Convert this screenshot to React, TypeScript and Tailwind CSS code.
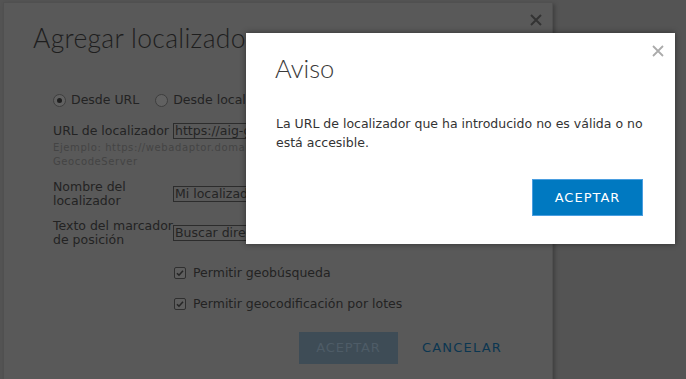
import React from "react";

const body = { fontFamily: '"DejaVu Sans", Verdana, sans-serif' };
const head = { fontFamily: 'Lato, "Open Sans", sans-serif' };

function Radio({ checked }: { checked?: boolean }) {
  return (
    <span className="w-[13px] h-[13px] rounded-full border border-[#3e3e3e] bg-[#616161] flex items-center justify-center shrink-0">
      {checked && <span className="w-[5px] h-[5px] rounded-full bg-[#1f1f1f]" />}
    </span>
  );
}

function Check() {
  return (
    <span className="w-[12px] h-[12px] rounded-[2px] border border-[#2f2f2f] bg-[#5e5e5e] flex items-center justify-center shrink-0">
      <svg width="8" height="8" viewBox="0 0 8 8">
        <path d="M1 4.2 L3 6.2 L7 1.8" stroke="#262626" strokeWidth="1.6" fill="none" />
      </svg>
    </span>
  );
}

function Field({ value }: { value: string }) {
  return (
    <div className="w-[230px] h-[16px] border border-[#2c2c2c] text-[12.5px] leading-[14px] px-[1px] text-[#242424] overflow-hidden whitespace-nowrap">
      {value}
    </div>
  );
}

export default function App() {
  return (
    <div className="relative w-[686px] h-[379px] overflow-hidden bg-[#545454]" style={body}>
      {/* dialogo de fondo (atenuado) */}
      <div className="relative ml-[3px] mt-[2px] w-[550px] h-[390px] bg-[#595959] border border-[#505050] shadow-[2px_2px_4px_rgba(0,0,0,0.25)]">
        <svg className="absolute left-[526px] top-[11px]" width="12" height="12" viewBox="0 0 12 12">
          <path d="M1 1 L11 11 M11 1 L1 11" stroke="#333" strokeWidth="2" />
        </svg>

        <h1 className="ml-[29px] mt-[18px] text-[26.5px] leading-[34px] font-light tracking-[0.3px] text-[#1e1e1e] whitespace-nowrap" style={head}>
          Agregar localizador
        </h1>

        <div className="ml-[49px] mt-[38px] text-[12.5px] leading-[14px] text-[#232323]">
          <div className="flex items-center h-[14px]">
            <Radio checked />
            <span className="ml-[5px]">Desde URL</span>
            <span className="ml-[16px]"><Radio /></span>
            <span className="ml-[5px] whitespace-nowrap">Desde localizador de ArcGIS Server</span>
          </div>

          <div className="flex items-center mt-[16px] h-[16px]">
            <span className="w-[120px] whitespace-nowrap">URL de localizador</span>
            <Field value="https://aig-geocode.esri.com/arcgis/rest/services/Locator" />
          </div>
          <div className="mt-[2px] text-[10px] leading-[14px] tracking-[0.6px] text-[#444] whitespace-nowrap">
            <div>Ejemplo: https://webadaptor.domain.com/arcgis/rest/services/Locator/</div>
            <div>GeocodeServer</div>
          </div>

          <div className="flex items-center mt-[11px] h-[28px]">
            <span className="w-[120px]">Nombre del<br />localizador</span>
            <Field value="Mi localizador" />
          </div>

          <div className="flex items-center mt-[11px] h-[28px]">
            <span className="w-[120px] whitespace-nowrap">Texto del marcador<br />de posición</span>
            <Field value="Buscar direcciones" />
          </div>

          <div className="ml-[121px] mt-[19px] h-[14px] flex items-center gap-[7px]">
            <Check />
            <span>Permitir geobúsqueda</span>
          </div>
          <div className="ml-[121px] mt-[17px] h-[14px] flex items-center gap-[7px]">
            <Check />
            <span>Permitir geocodificación por lotes</span>
          </div>

          <div className="flex items-center mt-[21px] ml-[246px]">
            <div className="w-[99px] h-[32px] bg-[#3e4c56] flex items-center justify-center text-[13px] tracking-[0.8px] text-[#4e5c67]">
              ACEPTAR
            </div>
            <div className="ml-[24px] text-[13px] tracking-[1.2px] text-[#0b3651]">CANCELAR</div>
          </div>
        </div>
      </div>

      {/* aviso */}
      <div className="absolute left-[246px] top-[33px] w-[429px] h-[211px] bg-white shadow-[0_0_6px_rgba(0,0,0,0.45)] flex flex-col">
        <svg className="absolute left-[406px] top-[12px]" width="12" height="12" viewBox="0 0 12 12">
          <path d="M1 1 L11 11 M11 1 L1 11" stroke="#ababab" strokeWidth="1.8" />
        </svg>
        <h2 className="ml-[29px] mt-[18px] text-[25.5px] leading-[34px] font-light text-[#3a3a3a]" style={head}>
          Aviso
        </h2>
        <p className="ml-[30px] mr-[30px] mt-[29px] text-[12.5px] leading-[19px] text-[#333]">
          La URL de localizador que ha introducido no es válida o no está accesible.
        </p>
        <div className="mt-auto mb-[28px] mr-[32px] self-end w-[111px] h-[37px] bg-[#0079c1] border border-[#4a9ee0] flex items-center justify-center text-white text-[13px] tracking-[1px]">
          ACEPTAR
        </div>
      </div>
    </div>
  );
}
